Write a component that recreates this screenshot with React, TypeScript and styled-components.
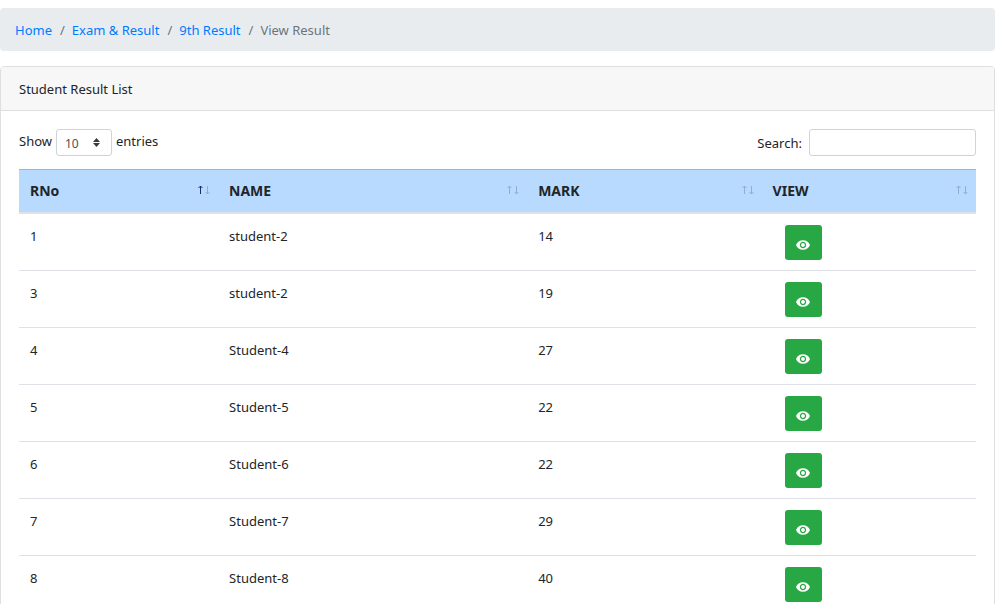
import React from "react";
import styled, { createGlobalStyle } from "styled-components";

const GlobalStyle = createGlobalStyle`
  *, *::before, *::after { box-sizing: border-box; }
  body {
    margin: 0;
    background: #fff;
    color: #212529;
    font-family: "Segoe UI", "Noto Sans", "Open Sans", sans-serif;
    font-size: 13px;
    line-height: 20px;
  }
`;

const Page = styled.main`
  padding: 8px 9px 16px 0;
`;

const Breadcrumb = styled.ol`
  display: flex;
  flex-wrap: wrap;
  margin: 0 0 15px;
  padding: 12px 15px 11px;
  list-style: none;
  background: #e9ecef;
  border-radius: 4px;
`;

const Crumb = styled.li`
  color: #6c757d;

  & + &::before {
    content: "/";
    padding: 0 7px 0 8px;
    color: #6c757d;
  }
`;

const CrumbLink = styled.a`
  color: #007bff;
  text-decoration: none;

  &:hover {
    text-decoration: underline;
  }
`;

const Card = styled.section`
  border: 1px solid #dfdfdf;
  border-radius: 4px;
`;

const CardHeader = styled.header`
  padding: 12px 18px 11px;
  background: #f7f7f7;
  border-bottom: 1px solid #dfdfdf;
  border-radius: 3px 3px 0 0;
`;

const CardBody = styled.div`
  padding: 18px;
`;

const Toolbar = styled.div`
  display: flex;
  justify-content: space-between;
  margin-bottom: 13px;
`;

const LengthLabel = styled.label`
  display: flex;
  gap: 4px;
  line-height: 24px;
`;

const SelectWrap = styled.span`
  position: relative;
  display: block;
  height: 27px;
`;

const LengthSelect = styled.select`
  display: block;
  width: 56px;
  height: 27px;
  padding: 2px 8px 0;
  appearance: none;
  background: #fff;
  border: 1px solid #ced4da;
  border-radius: 3px;
  color: #495057;
  font: inherit;
  font-size: 12px;
`;

const Caret = styled.svg`
  position: absolute;
  top: 9px;
  right: 12px;
  pointer-events: none;
`;

const SearchLabel = styled.label`
  display: flex;
  align-items: center;
  gap: 7px;
`;

const SearchInput = styled.input`
  width: 167px;
  height: 27px;
  padding: 4px 8px;
  background: #fff;
  border: 1px solid #ced4da;
  border-radius: 3px;
  color: #495057;
  font: inherit;
`;

const Table = styled.table`
  width: 100%;
  table-layout: fixed;
  border-collapse: separate;
  border-spacing: 0;
`;

const HeadCell = styled.th<{ $width: string }>`
  width: ${(p) => p.$width};
  height: 45px;
  padding: 0 7px 0 11px;
  background: #b8daff;
  border-top: 1px solid #7abaff;
  border-bottom: 2px solid #dee2e6;
  text-align: left;
  font-size: 14px;
  font-weight: 700;
`;

const SortButton = styled.button`
  display: flex;
  align-items: center;
  justify-content: space-between;
  width: 100%;
  padding: 0;
  background: none;
  border: 0;
  color: inherit;
  font: inherit;
  cursor: pointer;
`;

const SortArrows = styled.svg`
  margin-bottom: 3px;
`;

const Cell = styled.td`
  height: 57px;
  padding: 12px 11px 0;
  border-bottom: 1px solid #dee2e6;
  vertical-align: top;
`;

const ActionCell = styled(Cell)`
  padding: 11px 23px 0;
`;

const ViewButton = styled.button`
  display: flex;
  align-items: center;
  justify-content: center;
  width: 37px;
  height: 35px;
  padding: 4px 0 0;
  background: #28a745;
  border: 0;
  border-radius: 3px;
  color: #fff;
  cursor: pointer;
`;

const columns = [
  { title: "RNo", width: "20.8%", sorted: true },
  { title: "NAME", width: "32.3%", sorted: false },
  { title: "MARK", width: "24.5%", sorted: false },
  { title: "VIEW", width: "22.4%", sorted: false },
];

const results = [
  { rno: 1, name: "student-2", mark: 14 },
  { rno: 3, name: "student-2", mark: 19 },
  { rno: 4, name: "Student-4", mark: 27 },
  { rno: 5, name: "Student-5", mark: 22 },
  { rno: 6, name: "Student-6", mark: 22 },
  { rno: 7, name: "Student-7", mark: 29 },
  { rno: 8, name: "Student-8", mark: 40 },
];

function Arrows({ active }: { active: boolean }) {
  return (
    <SortArrows width="14" height="10" viewBox="0 0 14 10" fill="none" aria-hidden="true">
      <path
        d="M3.5 9V1M1.5 3L3.5 1L5.5 3"
        stroke={active ? "#1c2a6b" : "#93add0"}
      />
      <path d="M10.5 1V9M8.5 7L10.5 9L12.5 7" stroke="#93add0" />
    </SortArrows>
  );
}

function EyeIcon() {
  return (
    <svg width="14" height="10" viewBox="1 4.5 22 15" fill="currentColor" aria-hidden="true">
      <path d="M12 4.5C7 4.5 2.73 7.61 1 12c1.73 4.39 6 7.5 11 7.5s9.27-3.11 11-7.5c-1.73-4.39-6-7.5-11-7.5zM12 17c-2.76 0-5-2.24-5-5s2.24-5 5-5 5 2.24 5 5-2.24 5-5 5zm0-8c-1.66 0-3 1.34-3 3s1.34 3 3 3 3-1.34 3-3-1.34-3-3-3z" />
    </svg>
  );
}

export default function App() {
  return (
    <>
      <GlobalStyle />
      <Page>
        <nav aria-label="Breadcrumb">
          <Breadcrumb>
            <Crumb><CrumbLink href="#home">Home</CrumbLink></Crumb>
            <Crumb><CrumbLink href="#exam">Exam &amp; Result</CrumbLink></Crumb>
            <Crumb><CrumbLink href="#ninth">9th Result</CrumbLink></Crumb>
            <Crumb aria-current="page">View Result</Crumb>
          </Breadcrumb>
        </nav>
        <Card>
          <CardHeader>Student Result List</CardHeader>
          <CardBody>
            <Toolbar>
              <LengthLabel htmlFor="length">
                Show
                <SelectWrap>
                  <LengthSelect id="length" defaultValue="10">
                    <option>10</option>
                    <option>25</option>
                    <option>50</option>
                    <option>100</option>
                  </LengthSelect>
                  <Caret width="7" height="9" viewBox="0 0 7 9" fill="#343a40" aria-hidden="true">
                    <path d="M3.5 0L7 4H0zM3.5 9L0 5h7z" />
                  </Caret>
                </SelectWrap>
                entries
              </LengthLabel>
              <SearchLabel htmlFor="search">
                Search:
                <SearchInput id="search" type="search" />
              </SearchLabel>
            </Toolbar>
            <Table>
              <thead>
                <tr>
                  {columns.map((c) => (
                    <HeadCell key={c.title} $width={c.width} aria-sort={c.sorted ? "ascending" : undefined}>
                      <SortButton type="button">
                        {c.title}
                        <Arrows active={c.sorted} />
                      </SortButton>
                    </HeadCell>
                  ))}
                </tr>
              </thead>
              <tbody>
                {results.map((r) => (
                  <tr key={r.rno}>
                    <Cell>{r.rno}</Cell>
                    <Cell>{r.name}</Cell>
                    <Cell>{r.mark}</Cell>
                    <ActionCell>
                      <ViewButton type="button" aria-label={`View result ${r.rno}`}>
                        <EyeIcon />
                      </ViewButton>
                    </ActionCell>
                  </tr>
                ))}
              </tbody>
            </Table>
          </CardBody>
        </Card>
      </Page>
    </>
  );
}
